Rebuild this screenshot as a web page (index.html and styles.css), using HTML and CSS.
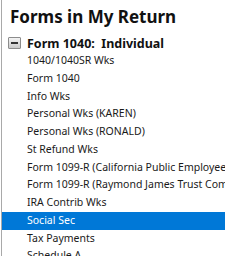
FILE: index.html
```html
<!DOCTYPE html>
<html>
<head>
<meta charset="utf-8">
<link rel="stylesheet" href="styles.css">
</head>
<body>
<div class="panel">
  <h1 class="title">Forms in My Return</h1>
  <div class="group">
    <span class="toggle"><span class="bar"></span></span>
    <span class="group-label">Form 1040:&nbsp; Individual</span>
  </div>
  <ul class="items">
    <li class="item">1040/1040SR Wks</li>
    <li class="item">Form 1040</li>
    <li class="item">Info Wks</li>
    <li class="item">Personal Wks (KAREN)</li>
    <li class="item">Personal Wks (RONALD)</li>
    <li class="item">St Refund Wks</li>
    <li class="item">Form 1099-R (California Public Employees Retirement)</li>
    <li class="item">Form 1099-R (Raymond James Trust Company)</li>
    <li class="item">IRA Contrib Wks</li>
    <li class="item selected">Social Sec</li>
    <li class="item">Tax Payments</li>
    <li class="item">Schedule A</li>
  </ul>
</div>
</body>
</html>
```

FILE: styles.css
```css
html, body {
  margin: 0;
  padding: 0;
  background: #ffffff;
  overflow: hidden;
}
.panel {
  width: 225px;
  height: 256px;
  box-sizing: border-box;
  border-left: 1px solid #a9a9a9;
  margin-left: 1px;
  font-family: "Noto Sans", "Open Sans", sans-serif;
  color: #111;
  overflow: hidden;
}
.title {
  margin: 0;
  padding: 6px 0 0 8px;
  font-size: 17px;
  font-weight: 700;
  line-height: 22px;
  color: #111;
  white-space: nowrap;
}
.group {
  display: flex;
  align-items: center;
  height: 18px;
  margin-top: 6px;
  padding-left: 6px;
}
.toggle {
  width: 11px;
  height: 10px;
  border: 1px solid #8c8c8c;
  border-radius: 1px;
  background: linear-gradient(#f4f4f4, #c9c9c9);
  display: flex;
  align-items: center;
  justify-content: center;
}
.bar {
  width: 7px;
  height: 2px;
  background: #333;
}
.group-label {
  margin-left: 6px;
  font-size: 12.5px;
  font-weight: 700;
  color: #111;
  white-space: nowrap;
}
.items {
  list-style: none;
  margin: 0;
  padding: 0;
}
.item {
  height: 17.75px;
  line-height: 17.75px;
  padding-left: 25px;
  font-size: 10.5px;
  color: #1a1a1a;
  white-space: nowrap;
}
.selected {
  background: #0078d7;
  color: #ffffff;
}
```
